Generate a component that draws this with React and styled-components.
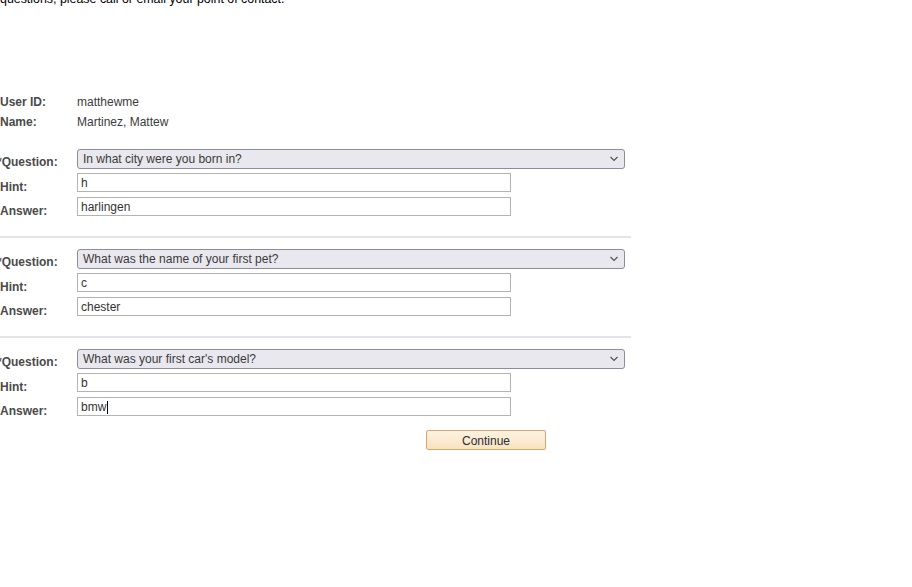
import React from "react";
import styled, { createGlobalStyle } from "styled-components";

const Global = createGlobalStyle`
  html, body { margin: 0; padding: 0; background: #fff; }
  body { font-family: Arial, "Liberation Sans", sans-serif; font-size: 12px; color: #000; overflow: hidden; }
`;

const Page = styled.div`
  width: 631px;
  height: 587px;
`;

const Intro = styled.p`
  margin: -8px 0 0 0;
  font-size: 12.4px;
  line-height: 14px;
  color: #000;
`;

const InfoGrid = styled.div`
  display: grid;
  grid-template-columns: 77px 1fr;
  grid-auto-rows: 20px;
  align-items: center;
  margin-top: 86px;
`;

const Label = styled.div`
  font-weight: bold;
  color: #4a4a4a;
  font-size: 12px;
  padding-top: ${(p) => p.$drop || 0}px;
  white-space: nowrap;
`;

const Req = styled.span`
  margin-left: -3px;
`;

const Value = styled.div`
  color: #3b3b3b;
  font-size: 12px;
`;

const Block = styled.div`
  display: grid;
  grid-template-columns: 77px 1fr;
  grid-auto-rows: 24px;
  align-items: start;
  margin-top: ${(p) => p.$top}px;
`;

const Divider = styled.div`
  height: 2px;
  background: #e4e4e4;
  margin: 15px 0 11px 0;
`;

const SelectWrap = styled.div`
  position: relative;
  width: 548px;
  height: 20px;
`;

const Select = styled.div`
  box-sizing: border-box;
  width: 100%;
  height: 20px;
  border: 1px solid #8d8c9c;
  border-radius: 3px;
  background: #e9e8ee;
  color: #3a3a3a;
  font-size: 12px;
  line-height: 18px;
  padding-left: 5px;
`;

const Chevron = styled.svg`
  position: absolute;
  right: 6px;
  top: 7px;
`;

const Field = styled.div`
  box-sizing: border-box;
  width: 434px;
  height: 19px;
  border: 1px solid #b3b3b3;
  background: #fff;
  color: #333;
  font-size: 12px;
  line-height: 17px;
  padding: 1px 0 0 3px;
  display: flex;
  align-items: center;
`;

const Caret = styled.span`
  display: inline-block;
  width: 1px;
  height: 13px;
  background: #000;
  margin-left: 1px;
`;

const ButtonRow = styled.div`
  display: flex;
  padding-left: 426px;
  margin-top: 9px;
`;

const Button = styled.button`
  box-sizing: border-box;
  width: 120px;
  height: 20px;
  border: 1px solid #e2a46a;
  border-radius: 2px;
  background: linear-gradient(#fdf3e2, #f9e3bf);
  color: #2b2b3a;
  font-family: Arial, "Liberation Sans", sans-serif;
  font-size: 12px;
  padding: 1px 0 0 0;
  cursor: pointer;
`;

const questions = [
  { q: "In what city were you born in?", hint: "h", answer: "harlingen" },
  { q: "What was the name of your first pet?", hint: "c", answer: "chester" },
  { q: "What was your first car's model?", hint: "b", answer: "bmw", caret: true },
];

function QuestionBlock({ item, top }) {
  return (
    <Block $top={top}>
      <Label $drop={6}>
        <Req>*</Req>Question:
      </Label>
      <SelectWrap>
        <Select>{item.q}</Select>
        <Chevron width="10" height="6" viewBox="0 0 10 6">
          <path d="M1.5 1 L5 4.5 L8.5 1" fill="none" stroke="#555" strokeWidth="1.2" />
        </Chevron>
      </SelectWrap>
      <Label $drop={7}>Hint:</Label>
      <Field>{item.hint}</Field>
      <Label $drop={7}>Answer:</Label>
      <Field>
        {item.answer}
        {item.caret && <Caret />}
      </Field>
    </Block>
  );
}

export default function App() {
  return (
    <Page>
      <Global />
      <Intro>questions, please call or email your point of contact.</Intro>
      <InfoGrid>
        <Label>User ID:</Label>
        <Value>matthewme</Value>
        <Label>Name:</Label>
        <Value>Martinez, Mattew</Value>
      </InfoGrid>
      {questions.map((item, i) => (
        <React.Fragment key={i}>
          <QuestionBlock item={item} top={i === 0 ? 17 : 0} />
          {i < questions.length - 1 && <Divider />}
        </React.Fragment>
      ))}
      <ButtonRow>
        <Button>Continue</Button>
      </ButtonRow>
    </Page>
  );
}
